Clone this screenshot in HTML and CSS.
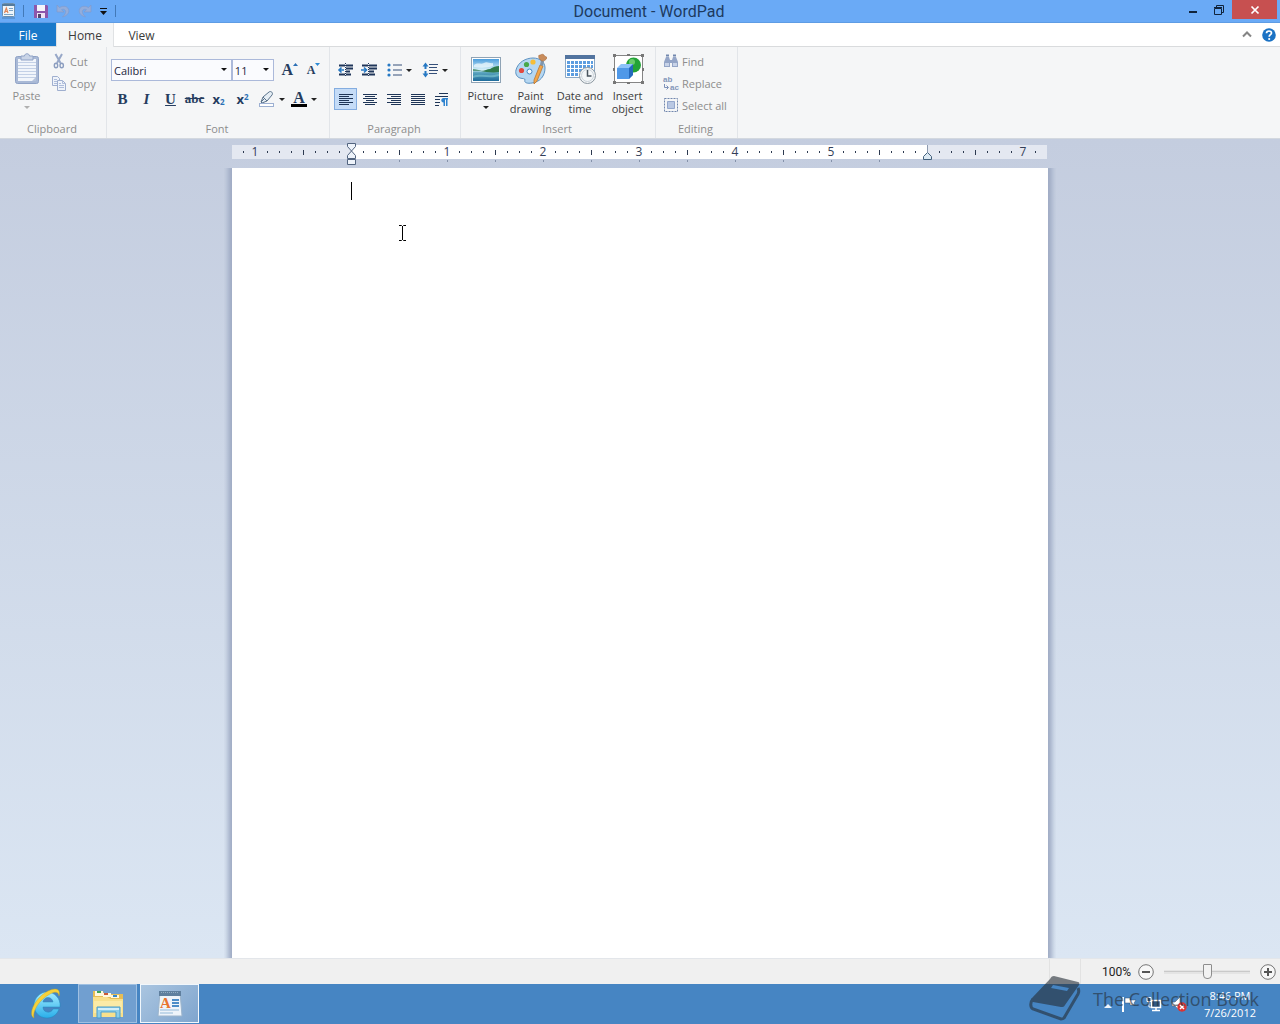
FILE: index.html
```html
<!DOCTYPE html>
<html lang="en">
<head>
<meta charset="UTF-8" />
<meta name="viewport" content="width=device-width, initial-scale=1" />
<title>Document - WordPad</title>
<link rel="stylesheet" href="styles.css">
</head>
<body>
<header class="titlebar">
  <div class="quick">
    <svg class="app-icon" width="16" height="18" viewBox="0 0 16 18"><rect x="2.500" y="1.500" width="12" height="13" rx="1" fill="#eef5fb" stroke="#6d8fae"/><path d="M2 3h13" stroke="#557b9c" stroke-width="2"/><path d="M4.500 11l1.800-5L8 11M5 9.500h2.500" stroke="#e0865a" stroke-width="1.200" fill="none"/><path d="M9 6.500h4M9 8.500h4M4 12.500h9" stroke="#7da5c8"/><path d="M2 16h13" stroke="#4a7fb5"/></svg>
    <span class="divider"></span>
    <button class="quick-btn" aria-label="Save"><svg width="14" height="14" viewBox="0 0 14 14"><path d="M0 1h13l1 1v12H0z" fill="#8d57ab"/><path d="M3 1h8v6H3z" fill="#f5f4fa"/><path d="M3 9h8v5H3z" fill="#eee3f2"/><path d="M4 10h3v4H4z" fill="#54456e"/></svg></button>
    <button class="quick-btn" aria-label="Undo" disabled><svg width="14" height="14" viewBox="0 0 14 14"><path d="M1 1v7h7L5.500 5.700C8 4.500 10 6 9.500 8.500c-.3 1.700-1.500 3-3 4.500 4-1 6.500-3.500 6.300-6.500C12.500 2.500 7.500 1 3.500 3.600z" fill="#93addb" stroke="#7f99c9" stroke-width=".6"/></svg></button>
    <button class="quick-btn" aria-label="Redo" disabled><svg width="14" height="14" viewBox="0 0 14 14"><path d="M13 1v7H6l2.500-2.300C6 4.500 4 6 4.500 8.500c.3 1.700 1.500 3 3 4.500-4-1-6.500-3.500-6.300-6.500C1.500 2.500 6.500 1 10.500 3.600z" fill="#93addb" stroke="#7f99c9" stroke-width=".6"/></svg></button>
    <button class="quick-more" aria-label="Customize Quick Access Toolbar"><svg width="8" height="8" viewBox="0 0 8 8"><path d="M0 1.500h7" stroke="#111"/><path d="M0 4h7L3.500 8z" fill="#111"/></svg></button>
    <span class="divider"></span>
  </div>
  <h1 class="title">Document - WordPad</h1>
  <div class="window-buttons">
    <button aria-label="Minimize"><svg width="12" height="12" viewBox="0 0 12 12"><path d="M2 8h8" stroke="#10243c" stroke-width="2"/></svg></button>
    <button aria-label="Restore"><svg width="12" height="12" viewBox="0 0 12 12"><path d="M1.500 4.500h7v6h-7zM1 3.500h8M3.500 3V1.500h7v7H9" fill="none" stroke="#10243c"/></svg></button>
    <button class="close" aria-label="Close"><svg width="10" height="10" viewBox="0 0 10 10"><path d="M1.500 1.500l7 7M8.500 1.500l-7 7" stroke="#fff" stroke-width="1.700"/></svg></button>
  </div>
</header>

<nav class="tabs">
  <button class="tab file">File</button>
  <button class="tab active">Home</button>
  <button class="tab">View</button>
  <div class="tabs-right">
    <button aria-label="Minimize the Ribbon"><svg width="10" height="8" viewBox="0 0 10 8"><path d="M1 5.500l4-4 4 4" fill="none" stroke="#858585" stroke-width="2"/></svg></button>
    <button class="help" aria-label="Help"><svg width="14" height="14" viewBox="0 0 14 14"><circle cx="7" cy="7" r="6.800" fill="#1b72c4"/><path d="M4.500 5.300C4.500 2.300 9.500 2.300 9.500 5c0 1.600-2.300 1.800-2.300 3.700" fill="none" stroke="#fff" stroke-width="1.700"/><circle cx="7.200" cy="11" r="1.100" fill="#fff"/></svg></button>
  </div>
</nav>

<main class="ribbon">
  <section class="group clipboard">
    <div class="group-body">
      <button class="big paste" disabled>
        <svg width="26" height="32" viewBox="0 0 26 32"><rect x="1.500" y="3.500" width="23" height="27" rx="2" fill="#a9b9d6" stroke="#8fa2c6"/><path d="M4 6h18v22H4z" fill="#f1f5fb"/><path d="M4 9.500h18M4 12.500h18M4 15.500h18M4 18.500h18M4 21.500h18M4 24.500h18" stroke="#c3d0e6"/><path d="M7 7V3h3.500c0-3 5-3 5 0H19v4z" fill="#c9d4e7" stroke="#8fa2c6"/><path d="M18 28l4-4v4z" fill="#b5c3dc"/></svg>
        <span>Paste</span><i class="arrow"></i>
      </button>
      <div class="list">
        <button disabled><svg width="16" height="16" viewBox="0 0 16 16"><path d="M4.500 1l5 9M11 1l-5 9" stroke="#98a8c8" stroke-width="2"/><ellipse cx="5" cy="12.500" rx="1.700" ry="2.300" fill="none" stroke="#8b9dbf" stroke-width="1.400"/><ellipse cx="10.700" cy="12.500" rx="1.700" ry="2.300" fill="none" stroke="#8b9dbf" stroke-width="1.400"/></svg>Cut</button>
        <button disabled><svg width="16" height="16" viewBox="0 0 16 16"><path d="M1.500 1.500h5l2 2v7h-7z" fill="#eff3fa" stroke="#9fafcf"/><path d="M3 4.500h3M3 6.500h3M3 8.500h3" stroke="#aebddb"/><path d="M6.500 5.500h5l3 3v7h-8z" fill="#eff3fa" stroke="#9fafcf"/><path d="M11.500 5.500v3h3M8 10.500h5M8 12.500h5M8 8.500h2" stroke="#aebddb" fill="none"/></svg>Copy</button>
      </div>
    </div>
    <h2>Clipboard</h2>
  </section>

  <section class="group font">
    <div class="group-body rows">
      <div class="row">
        <div class="combo family"><select aria-label="Font family"><option>Calibri</option><option>Arial</option></select></div>
        <div class="combo size"><select aria-label="Font size"><option>11</option><option>12</option></select></div>
        <button class="tool grow" aria-label="Grow font"><span class="serif">A</span><svg width="5" height="4" viewBox="0 0 5 4"><path d="M0 3l2.500-3L5 3z" fill="#2b6fb5"/></svg></button>
        <button class="tool shrink" aria-label="Shrink font"><span class="serif">A</span><svg width="5" height="4" viewBox="0 0 5 4"><path d="M0 0h5L2.500 3z" fill="#2b8ad5"/></svg></button>
      </div>
      <div class="row">
        <button class="tool serif" aria-label="Bold">B</button>
        <button class="tool serif italic" aria-label="Italic">I</button>
        <button class="tool serif underline" aria-label="Underline">U</button>
        <button class="tool serif strike" aria-label="Strikethrough">abc</button>
        <button class="tool script" aria-label="Subscript">x<small class="low">2</small></button>
        <button class="tool script" aria-label="Superscript">x<small class="high">2</small></button>
        <button class="tool split" aria-label="Text highlight color"><svg width="18" height="18" viewBox="0 0 18 18"><path d="M4 12l2-5 6-5c2-1.500 4.500 1 3 3l-5 6-5 2z" fill="#e6eef5" stroke="#59718a"/><path d="M6 7l4 4M4 12l3-3" stroke="#59718a"/><rect x="2.500" y="13.500" width="14" height="3" fill="#fff" stroke="#9db0d2"/></svg><i class="arrow"></i></button>
        <button class="tool split color" aria-label="Text color"><span class="serif">A</span><i class="arrow"></i></button>
      </div>
    </div>
    <h2>Font</h2>
  </section>

  <section class="group paragraph">
    <div class="group-body rows">
      <div class="row">
        <button class="tool" aria-label="Decrease indent"><svg width="17" height="15" viewBox="0 0 17 15"><path d="M2 2.500h6M9 2.500h7M9 5.500h7M9 8.500h4M2 11.500h6M9 11.500h5" stroke="#20365a" stroke-width="2"/><path d="M8.500 0v14" stroke="#20365a" stroke-dasharray="1 1"/><path d="M7 7H1.500M4.500 4.500L2 7l2.500 2.500" stroke="#2779c4" stroke-width="1.600" fill="none"/></svg></button>
        <button class="tool" aria-label="Increase indent"><svg width="17" height="15" viewBox="0 0 17 15"><path d="M1 2.500h6M8 2.500h8M8 5.500h8M8 8.500h5M1 11.500h6M8 11.500h6" stroke="#20365a" stroke-width="2"/><path d="M7.500 0v14" stroke="#20365a" stroke-dasharray="1 1"/><path d="M0 7h5.500M3 4.500L5.500 7 3 9.500" stroke="#2779c4" stroke-width="1.600" fill="none"/></svg></button>
        <button class="tool split list-btn" aria-label="Start a list"><svg width="16" height="14" viewBox="0 0 16 14"><path d="M7 2h9M7 7h9M7 12h9" stroke="#36507a"/><circle cx="3" cy="2" r="1.600" fill="#2779c4"/><circle cx="3" cy="7" r="1.600" fill="#2779c4"/><circle cx="3" cy="12" r="1.600" fill="#2779c4"/></svg><i class="arrow"></i></button>
        <button class="tool split" aria-label="Line spacing"><svg width="16" height="16" viewBox="0 0 16 16"><path d="M7 2.500h9M7 5.500h8M7 8.500h9M7 11.500h8" stroke="#36507a"/><path d="M3.500 3v10" stroke="#2779c4" stroke-width="2" stroke-dasharray="4 2"/><path d="M.5 4.500l3-4 3 4zM.5 11.500l3 4 3-4z" fill="#2779c4"/></svg><i class="arrow"></i></button>
      </div>
      <div class="row">
        <button class="tool selected" aria-label="Align left"><svg width="16" height="13" viewBox="0 0 16 13"><path d="M1 1.500h14M1 3.500h10M1 5.500h14M1 7.500h10M1 9.500h14M1 11.500h10" stroke="#1e3557"/></svg></button>
        <button class="tool" aria-label="Center"><svg width="16" height="13" viewBox="0 0 16 13"><path d="M1 1.500h14M3 3.500h10M1 5.500h14M4 7.500h8M1 9.500h14M3 11.500h10" stroke="#1e3557"/></svg></button>
        <button class="tool" aria-label="Align right"><svg width="16" height="13" viewBox="0 0 16 13"><path d="M1 1.500h14M5 3.500h10M1 5.500h14M5 7.500h10M1 9.500h14M5 11.500h10" stroke="#1e3557"/></svg></button>
        <button class="tool" aria-label="Justify"><svg width="16" height="13" viewBox="0 0 16 13"><path d="M1 1.500h14M1 3.500h14M1 5.500h14M1 7.500h14M1 9.500h14M1 11.500h14" stroke="#1e3557"/></svg></button>
        <button class="tool" aria-label="Paragraph"><svg width="16" height="15" viewBox="0 0 16 15"><path d="M5 1.500h9M1 4.500h13M1 7.500h5M1 10.500h5M1 13.500h4" stroke="#1e3557"/><path d="M14 6H9.500c-3 0-3 4.500 0 4.500V14H11V7.500h1V14h1.500V7.500h.5z" fill="#2e83cf"/></svg></button>
      </div>
    </div>
    <h2>Paragraph</h2>
  </section>

  <section class="group insert">
    <div class="group-body">
      <button class="big"><svg width="32" height="32" viewBox="0 0 32 32">
        <defs><linearGradient id="sky" x2="0" y2="1"><stop offset="0" stop-color="#4a9ddd"/><stop offset=".5" stop-color="#d9f1f8"/><stop offset=".62" stop-color="#58a3bd"/><stop offset="1" stop-color="#1f6c9c"/></linearGradient></defs>
        <rect x="1.500" y="4.500" width="29" height="25" fill="#fff" stroke="#8fa3b5"/><path d="M3 6h26v22H3z" fill="url(#sky)"/><path d="M4 12c4-3 7 0 10-2s6 1 9 0v3c-6 2-13 2-19 1z" fill="#e7f5fb" opacity=".8"/><path d="M29 13v6c-6 1-14 0-18-1 4 0 6-2 9-2 3-2 6-3 9-3z" fill="#2f7a4c"/><path d="M3 16c3 0 6 1 9 2H3z" fill="#5b9c83"/><path d="M3 23c8-3 15 1 26-2v2c-9 3-16-1-26 2z" fill="#77c0cd" opacity=".7"/></svg>
        <span>Picture</span><i class="arrow"></i></button>
      <button class="big"><svg width="32" height="32" viewBox="0 0 32 32"><path d="M5 25c-3-1-5-4-4-8C3 9 11 5 18 5c7 0 12 4 12 10 0 8-5 14-13 15-6 1-8-1-7-3 0-2-2-1-5-2z" fill="#b5d7f2" stroke="#5e92c1"/><circle cx="14.500" cy="18.500" r="2.500" fill="#f6fbff" stroke="#4487c4"/><circle cx="6.500" cy="17.500" r="2.600" fill="#e2493f"/><circle cx="11.500" cy="11.500" r="2.600" fill="#48a84a"/><circle cx="18" cy="9" r="2.600" fill="#f6be37"/><path d="M25 12l3 1-6 15-3 3v-4z" fill="#f3a649" stroke="#b77635" stroke-width=".8"/><path d="M25 12l1-5 3 1-1 5z" fill="#8196ab"/><path d="M24 2c1 1 3-2 5 0 0 2 3 1 3 3-1 2-3 3-5 3-2-1-4-3-3-6z" fill="#c98d5c" stroke="#a76a3b" stroke-width=".6"/></svg>
        <span>Paint drawing</span></button>
      <button class="big wide"><svg width="32" height="32" viewBox="0 0 32 32"><path d="M1.500 2.500h29v22h-29z" fill="#fff" stroke="#8ba8c5"/><path d="M1 2h30v4H1z" fill="#52749f"/><path d="M3 8h3v3H3zM7 8h3v3H7zM11 8h3v3h-3zM15 8h3v3h-3zM19 8h3v3h-3zM23 8h3v3h-3zM27 8h2v3h-2zM3 12h3v3H3zM7 12h3v3H7zM11 12h3v3h-3zM15 12h3v3h-3zM19 12h3v3h-3zM23 12h3v3h-3zM27 12h2v3h-2zM3 16h3v3H3zM7 16h3v3H7zM11 16h3v3h-3zM15 16h3v3h-3zM3 20h3v3H3zM7 20h3v3H7zM11 20h3v3h-3z" fill="#5c9de0"/><circle cx="23.500" cy="22.500" r="8" fill="#f3f6f8" stroke="#8b969f"/><circle cx="23.500" cy="22.500" r="6" fill="none" stroke="#cbd3da"/><path d="M23.500 17v6h4" fill="none" stroke="#49545e" stroke-width="1.500"/></svg>
        <span>Date and time</span></button>
      <button class="big narrow"><svg width="32" height="32" viewBox="0 0 32 32"><path d="M2.500 2.500h28v27h-28z" fill="#fff" stroke="#858585"/><path d="M1 1h3v3H1zM15 1h3v2h-3zM29 1h3v3h-3zM1 15h2v3H1zM30 15h2v3h-2zM1 28h3v3H1zM15 29h3v2h-3zM29 28h3v3h-3z" fill="#777"/><circle cx="21.500" cy="12" r="7.500" fill="#23a337"/><circle cx="20" cy="9" r="3" fill="#6acb6c"/><path d="M5 15l4-4h12v11l-4 4H5z" fill="#8cc2fa"/><path d="M5 15h12v11H5z" fill="#4f98e8"/><path d="M17 15l4-4v11l-4 4z" fill="#2569bc"/></svg>
        <span>Insert object</span></button>
    </div>
    <h2>Insert</h2>
  </section>

  <section class="group editing">
    <div class="group-body">
      <div class="list">
        <button disabled><svg width="16" height="16" viewBox="0 0 16 16"><path d="M1 9l2-5h3l1 3h2l1-3h3l2 5v5H9v-4H7v4H1z" fill="#94a5c7"/><path d="M3 2.500h3M10 2.500h3" stroke="#7287ae" stroke-width="2"/><path d="M2 10h4v3H2zM10 10h4v3h-4z" fill="#c8d3e8"/></svg>Find</button>
        <button disabled><svg class="replace" width="16" height="16" viewBox="0 0 16 16"><text x="0" y="7" class="mini">ab</text><text x="7" y="15" class="mini">ac</text><path d="M1.500 9v3.500H5M3.500 10.500l2 2-2 2" fill="none" stroke="#7c90b8"/></svg>Replace</button>
        <button disabled><svg width="16" height="16" viewBox="0 0 16 16"><path d="M1.500 1.500h13v13h-13z" fill="none" stroke="#7187ad" stroke-dasharray="2 1"/><path d="M4.500 4.500h7v7h-7z" fill="#b9c8e3" stroke="#94a7cc"/></svg>Select all</button>
      </div>
    </div>
    <h2>Editing</h2>
  </section>
</main>

<div class="workspace">
  <svg class="ruler" width="816" height="22" viewBox="0 0 816 22">
    <defs>
      <pattern id="inch" x="119" width="96" height="14" patternUnits="userSpaceOnUse"><path d="M12 6h1v2h-1zM24 6h1v2h-1zM36 6h1v2h-1zM48 5h1v5h-1zM60 6h1v2h-1zM72 6h1v2h-1zM84 6h1v2h-1z" fill="#2d3a50"/></pattern>
      <pattern id="stops" x="119" y="14" width="48" height="4" patternUnits="userSpaceOnUse"><path d="M0 1h1v2H0z" fill="#8592aa"/></pattern>
    </defs>
    <path d="M0 0h815v14H0z" fill="#e4e8f1"/>
    <path d="M119 0h577v14H119z" fill="#fff"/>
    <path d="M6 0h802v14H6z" fill="url(#inch)"/>
    <path d="M160 14h500v4H160z" fill="url(#stops)"/>
    <g class="numbers"><text x="23" y="11">1</text><text x="215" y="11">1</text><text x="311" y="11">2</text><text x="407" y="11">3</text><text x="503" y="11">4</text><text x="599" y="11">5</text><text x="791" y="11">7</text></g>
    <path d="M115.500-1.500h8v3l-4 4.500-4-4.500zM115.500 13.500v-3l4-4.500 4 4.500v3zM115.500 14.500h8v5h-8z" fill="#eef3fa" stroke="#52647f"/>
    <path d="M695.500 0v7" stroke="#8e9bb0"/><path d="M691.500 14.500v-3l4-4 4 4v3z" fill="#dce9f3" stroke="#44617d"/>
  </svg>
  <div class="page">
    <textarea aria-label="Document text" spellcheck="false"></textarea>
    <span class="caret"></span>
    <svg class="pointer" width="9" height="17" viewBox="0 0 9 17"><path d="M1 .5h2.500l1 1 1-1H8M4.500 1v14M1 15.500h2.500l1-1 1 1H8" fill="none" stroke="#000"/></svg>
  </div>
</div>

<div class="status">
  <span class="cell"></span>
  <label for="zoom">100%</label>
  <button aria-label="Zoom out"><svg width="16" height="16" viewBox="0 0 16 16"><circle cx="8" cy="8" r="7.300" fill="#f7f7f7" stroke="#757575"/><path d="M4 8h8" stroke="#555" stroke-width="2"/></svg></button>
  <input id="zoom" type="range" min="0" max="100" value="50">
  <button aria-label="Zoom in"><svg width="16" height="16" viewBox="0 0 16 16"><circle cx="8" cy="8" r="7.300" fill="#f7f7f7" stroke="#757575"/><path d="M4 8h8M8 4v8" stroke="#555" stroke-width="2"/></svg></button>
</div>

<footer class="taskbar">
  <button class="task" aria-label="Internet Explorer"><svg width="32" height="32" viewBox="0 0 32 32">
    <defs><linearGradient id="ie" x2="0" y2="1"><stop offset="0" stop-color="#a4ecff"/><stop offset="1" stop-color="#29aeea"/></linearGradient></defs>
    <path d="M30 19H13c0 6 8 7 10 2h6c-2 6-7 9-12 9C9 30 4 24 4 17S10 4 17 4s14 6 13 15zM13 14h10c-1-6-9-6-10 0z" fill="url(#ie)" stroke="#2088bd" stroke-width=".5"/>
    <path d="M4 30C-3 26 6 9 18 3c8-4 13-2 11 5 0-4-4-5-9-2C10 11 2 23 4 30z" fill="#f6d13a" stroke="#c6a21c" stroke-width=".4"/></svg></button>
  <button class="task open" aria-label="File Explorer"><svg width="34" height="32" viewBox="0 0 34 32"><path d="M2 3h10l1 3h19v23H2z" fill="#e6bd55"/><path d="M4 3h8v5H4zM12 5h8v4h-8zM20 7h8v3h-8z" fill="#fff8df"/><path d="M6 3h4v2H6z" fill="#3ca557"/><path d="M13 5h4v2h-4z" fill="#cb5a37"/><path d="M22 7h4v2h-4z" fill="#3789ca"/><path d="M2 9h14l4 2h12v18H2z" fill="#f8e08c"/><path d="M3 13h28v12H3z" fill="#fbeaa6"/><path d="M6 30V19h23v11h-4v-6H10v6z" fill="#8cceea" stroke="#4a9cca"/><path d="M7 21h21" stroke="#d3effa" stroke-width="2"/></svg></button>
  <button class="task open active" aria-label="WordPad"><svg width="26" height="32" viewBox="0 0 26 32"><path d="M3 4h20l2 24H1z" fill="#eef4fa" stroke="#9db5cc"/><path d="M2 3h22v5H2z" fill="#5f7f9e"/><path d="M4 4.500h18" stroke="#94adc3" stroke-dasharray="1 1"/><path d="M15 12h7M15 15h7M15 18h7" stroke="#4b8cc8" stroke-width="2"/><path d="M3 22h19M3 25h13" stroke="#94bad9"/><text x="3" y="20" class="task-letter">A</text></svg></button>
  <div class="tray">
    <button aria-label="Show hidden icons"><svg width="8" height="16" viewBox="0 0 8 16"><path d="M0 12l4-4 4 4z" fill="#eef4fa"/></svg></button>
    <button aria-label="Action Center"><svg width="16" height="16" viewBox="0 0 16 16"><path d="M2 1v15" stroke="#fff" stroke-width="2"/><path d="M4 2h5v2h6l-2 3 1 2H9V7H4z" fill="#fff" stroke="#304e70" stroke-width=".5"/></svg></button>
    <button aria-label="Network"><svg width="16" height="16" viewBox="0 0 16 16"><path d="M5.500 4.500h9v7h-9zM10 12v2M6 14.500h8" fill="#315981" stroke="#fff" stroke-width="1.500"/><path d="M1 1.500h4v4H1zM3 6v5h2" fill="#315981" stroke="#fff"/></svg></button>
    <button aria-label="Volume muted"><svg width="16" height="16" viewBox="0 0 16 16"><path d="M1 6h3l5-5v14l-5-5H1z" fill="#fff" stroke="#596779" stroke-width=".6"/><circle cx="11" cy="11" r="4.700" fill="#d93434"/><path d="M9 9l4 4M13 9l-4 4" stroke="#fff" stroke-width="1.500"/></svg></button>
    <div class="clock"><time>8:46 PM</time><time>7/26/2012</time></div>
  </div>
  <div class="watermark">
    <svg width="52" height="48" viewBox="0 0 52 48"><path fill-rule="evenodd" d="M25 1c-2 0-3 1-4 3L3 23c-2 2-1 3 1 4l28 5c2 0 3 0 4-2L50 10c1-2 0-3-1-3zM24 10l16 3-2 3-16-3z"/><path d="M4 24c-3 3-3 8 0 10l28 10c1 0 2 0 3-1l14-24c1-2 1-4 0-6" fill="none" stroke="#252d36" stroke-width="3"/></svg>
    <span>The Collection Book</span>
  </div>
</footer>
</body>
</html>
```
FILE: styles.css
```css
* {
  box-sizing: border-box;
}
body {
  margin: 0;
  min-height: 100vh;
  display: flex;
  flex-direction: column;
  font-family: 'Open Sans', 'Noto Sans', sans-serif;
  font-size: 11px;
  color: #3b3b3b;
}
button {
  margin: 0;
  padding: 0;
  border: 0;
  background: none;
  font: inherit;
  color: inherit;
}
h1, h2 {
  margin: 0;
  font-weight: 400;
}
svg {
  display: block;
  flex: none;
}

/* title bar */
.titlebar {
  display: flex;
  height: 23px;
  background: #6aaaf6;
  border-bottom: 1px solid #5e9ce4;
}
.quick {
  display: flex;
  align-items: center;
  width: 118px;
}
.quick .divider {
  width: 1px;
  height: 12px;
  margin: 0 6px 0 7px;
  background: #4279b8;
}
.quick-btn {
  width: 22px;
  display: flex;
  justify-content: center;
}
.quick-more {
  margin: 0 0 0 4px;
}
.quick .divider:last-child {
  margin-right: 0;
}
.title {
  flex: 1;
  text-align: center;
  font-family: Roboto, sans-serif;
  font-size: 16px;
  line-height: 23px;
  color: #1d3a5f;
}
.window-buttons {
  display: flex;
  align-items: flex-start;
  padding-right: 3px;
}
.window-buttons button {
  width: 26px;
  height: 19px;
  display: flex;
  align-items: center;
  justify-content: center;
}
.window-buttons .close {
  width: 45px;
  background: #c75050;
}

/* tabs */
.tabs {
  display: flex;
  height: 24px;
  background: #fff;
  border-bottom: 1px solid #d9dbdd;
}
.tab {
  width: 55px;
  height: 24px;
  font-size: 12px;
  line-height: 25px;
}
.tab.file {
  width: 56px;
  height: 23px;
  background: #1979ca;
  color: #fff;
}
.tab.active {
  width: 58px;
  background: #f5f6f7;
  border: 1px solid #e0e2e4;
  border-width: 0 1px;
}
.tabs-right {
  display: flex;
  align-items: center;
  gap: 10px;
  margin-left: auto;
  padding-right: 4px;
}

/* ribbon */
.ribbon {
  display: flex;
  height: 92px;
  background: #f5f6f7;
  border-bottom: 1px solid #d3d8df;
}
.group {
  display: flex;
  flex-direction: column;
  border-right: 1px solid #e2e5e9;
}
.group h2 {
  margin-top: auto;
  padding-right: 2px;
  font-size: 11px;
  line-height: 18px;
  text-align: center;
  color: #8d8d8d;
}
.group-body {
  display: flex;
  padding: 4px 2px 0;
}
.clipboard { width: 107px; }
.font { width: 223px; }
.paragraph { width: 131px; }
.insert { width: 195px; }
.editing { width: 82px; }
.group-body.rows {
  flex-direction: column;
  gap: 7px;
  padding: 12px 4px 0;
}
.row {
  display: flex;
  gap: 1px;
}
.big {
  width: 45px;
  display: flex;
  flex-direction: column;
  align-items: center;
  line-height: 13px;
}
.big svg {
  margin: 2px 0 4px;
}
.big.wide {
  width: 54px;
}
.big.narrow {
  width: 41px;
}
.big.paste {
  width: 49px;
}
.arrow {
  border: 3px solid transparent;
  border-top-color: #222;
  border-bottom: 0;
}
.big .arrow {
  margin-top: 4px;
}
button:disabled {
  color: #8d8d8d;
}
button:disabled .arrow {
  border-top-color: #b0b0b0;
}
.list {
  margin-top: -1px;
}
.list button {
  display: flex;
  align-items: center;
  gap: 3px;
  height: 22px;
}
.editing .list {
  padding-left: 5px;
}
.replace {
  overflow: visible;
}
.mini {
  font: bold 8px 'Liberation Sans', sans-serif;
  fill: #8497ba;
}
.combo {
  position: relative;
  width: 122px;
}
.combo.size {
  width: 43px;
  margin: 0 3px 0 -1px;
}
.combo select {
  appearance: none;
  width: 100%;
  height: 22px;
  padding: 0 2px;
  border: 1px solid #abb9da;
  border-radius: 0;
  background: #fafbfe;
  font: inherit;
  color: #1e2740;
}
.combo::after {
  content: '';
  position: absolute;
  right: 5px;
  top: 9px;
  border: 3px solid transparent;
  border-top-color: #111;
  border-bottom: 0;
}
.tool {
  width: 23px;
  height: 22px;
  display: flex;
  align-items: center;
  justify-content: center;
  color: #263d5f;
}
.serif {
  font-family: 'Liberation Serif', serif;
  font-weight: 700;
  font-size: 15px;
}
.grow .serif {
  font-size: 16px;
}
.shrink .serif {
  font-size: 12px;
}
.grow svg, .shrink svg {
  align-self: flex-start;
  margin-top: 4px;
}
.italic {
  font-style: italic;
}
.underline {
  text-decoration: underline;
}
.strike {
  font-size: 13px;
  text-decoration: line-through;
}
.script {
  font-weight: 700;
  font-size: 13px;
}
.script small {
  font-size: 8px;
  line-height: 8px;
  color: #2b6fb5;
}
.script .low {
  align-self: flex-end;
  margin-bottom: 4px;
}
.script .high {
  align-self: flex-start;
  margin-top: 5px;
}
.split {
  width: 32px;
  gap: 4px;
}
.color .serif {
  width: 16px;
  height: 16px;
  font-size: 16px;
  line-height: 13px;
  border-bottom: 3px solid #000;
}
.list-btn {
  margin: 0 3px 0 1px;
}
.selected {
  background: #c5dcf7;
  border: 1px solid #84ade0;
}

/* document area */
.workspace {
  flex: 1;
  display: flex;
  flex-direction: column;
  align-items: center;
  padding-top: 6px;
  background: linear-gradient(#c4cddf, #dbe6f3);
}
.ruler {
  overflow: visible;
  margin-bottom: 1px;
}
.numbers {
  font-size: 12px;
  text-anchor: middle;
  fill: #333e58;
}
.page {
  position: relative;
  flex: 1;
  display: flex;
  width: 100%;
  max-width: 816px;
  background: #fff;
  box-shadow: 0 0 5px 4px #9eabc4;
  clip-path: inset(0 -8px 0 -8px);
}
.page textarea {
  flex: 1;
  padding: 12px 120px;
  border: 0;
  outline: 0;
  resize: none;
  background: none;
  font: 15px 'Open Sans', sans-serif;
}
.caret {
  position: absolute;
  left: 119px;
  top: 14px;
  width: 1px;
  height: 18px;
  background: #000;
}
.pointer {
  position: absolute;
  left: 166px;
  top: 57px;
}

/* status bar */
.status {
  display: flex;
  align-items: center;
  justify-content: flex-end;
  height: 26px;
  padding-right: 4px;
  background: #f0f0f0;
  border-top: 1px solid #e3e6ea;
  font-family: Roboto, sans-serif;
  font-size: 12px;
  color: #222;
}
.status .cell {
  align-self: stretch;
  width: 32px;
  margin-right: 21px;
  border: 1px solid #e2e2e2;
  border-width: 0 1px;
}
.status label {
  margin-right: 7px;
}
.status input {
  appearance: none;
  width: 86px;
  height: 16px;
  margin: 0 10px;
  background: linear-gradient(#c9c9c9, #c9c9c9) center / 100% 1px no-repeat, linear-gradient(#e4e4e4, #e4e4e4) center / 100% 4px no-repeat;
}
.status input::-webkit-slider-thumb {
  appearance: none;
  width: 9px;
  height: 15px;
  background: #f2f2f2;
  border: 1px solid #8d8d8d;
  border-radius: 1px 1px 4px 4px;
}

/* taskbar */
.taskbar {
  position: relative;
  display: flex;
  gap: 3px;
  height: 40px;
  padding-left: 16px;
  background: #4685c3;
}
.task {
  width: 59px;
  height: 39px;
  display: flex;
  align-items: center;
  justify-content: center;
}
.task.open {
  background: #719fd0;
  border: 1px solid #9fc0e2;
}
.task.active {
  background: linear-gradient(135deg, #aac5e0, #7fa5ce);
  border-color: #f1f7fc;
}
.task-letter {
  font: bold 15px 'Liberation Serif', serif;
  fill: #e9742f;
}
.tray {
  display: flex;
  align-items: center;
  gap: 9px;
  margin-left: auto;
  padding-right: 24px;
  color: #fff;
}
.clock {
  display: flex;
  flex-direction: column;
  align-items: center;
  margin-left: 8px;
  font-size: 11px;
  line-height: 17px;
}
.watermark {
  position: absolute;
  right: 21px;
  bottom: 1px;
  display: flex;
  align-items: center;
  gap: 12px;
  font-size: 18px;
  color: #252d36;
  fill: #252d36;
  opacity: .6;
  pointer-events: none;
}
```
